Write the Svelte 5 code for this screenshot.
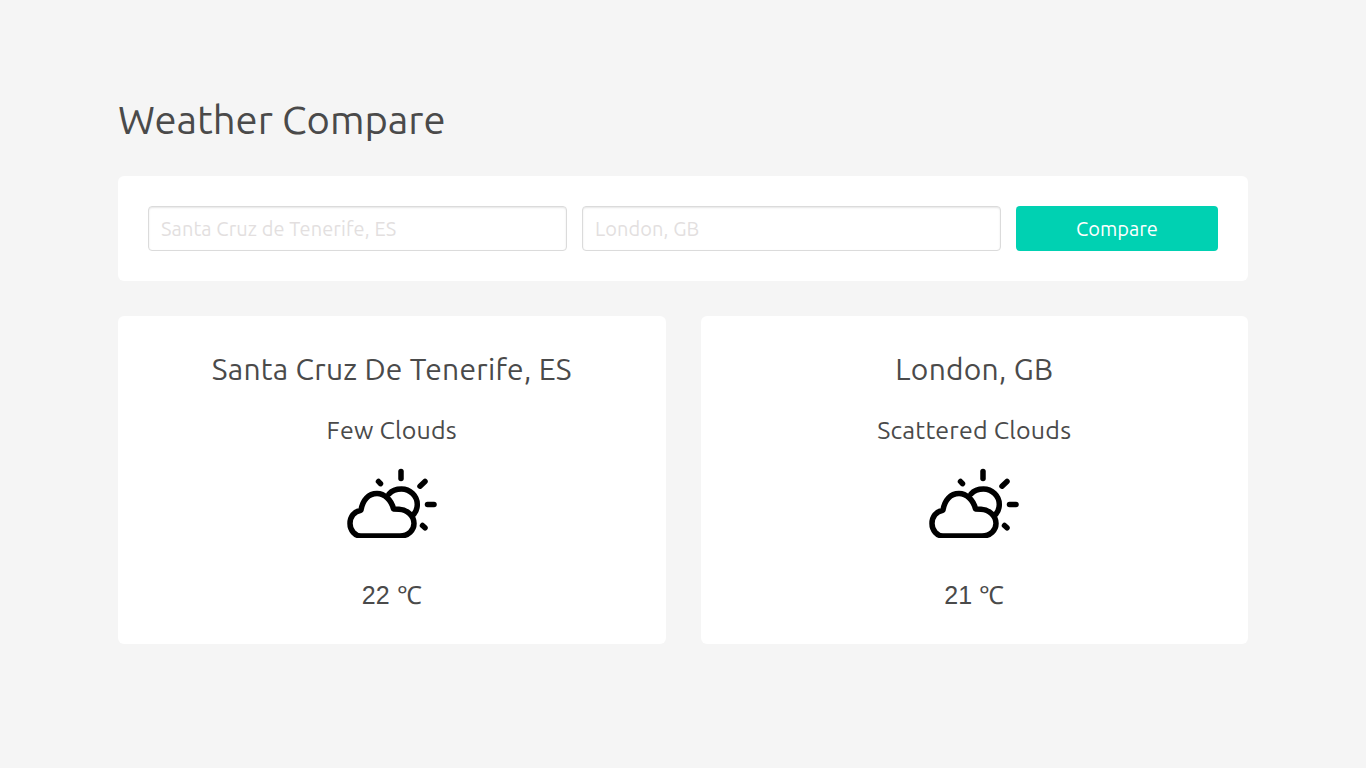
<script>
  const cities = [
    { name: 'Santa Cruz De Tenerife, ES', sky: 'Few Clouds', temp: '22 ℃' },
    { name: 'London, GB', sky: 'Scattered Clouds', temp: '21 ℃' },
  ];
</script>

<main class="page">
  <h1>Weather Compare</h1>

  <form class="search" onsubmit={(e) => e.preventDefault()}>
    <input type="text" placeholder="Santa Cruz de Tenerife, ES" />
    <input type="text" placeholder="London, GB" />
    <button type="submit">Compare</button>
  </form>

  <section class="results">
    {#each cities as city}
      <article class="card">
        <h2>{city.name}</h2>
        <h3>{city.sky}</h3>
        <svg class="icon" viewBox="0 0 90 70" width="90" height="70" aria-hidden="true">
          <g fill="none" stroke="#000" stroke-width="5.500" stroke-linecap="round" stroke-linejoin="round">
            <path d="M14 68H53C61.500 68 67 62 67 55.500C67 48 60.500 41.800 52 41.300L46.500 41C44.500 32 37.500 25.500 30 25.500C21.500 25.500 15.500 32 14 42.200C7 43.200 3 49 3 55.500C3 62.500 8 68 14 68Z" />
            <path d="M42 26C45 22.500 50 21 54.500 21C63 21 70.300 28 70.300 36.500C70.300 40 69 43.500 67 46" />
            <path d="M54 3.500v7" />
            <path d="M31.500 13.500l2 2.200" />
            <path d="M78 13.500l-5 4.700" />
            <path d="M80.500 36.500H87" />
            <path d="M75.500 57.500l2.500 2.300" />
          </g>
        </svg>
        <p>{city.temp}</p>
      </article>
    {/each}
  </section>
</main>

<style>
  :global(body) {
    background: #f5f5f5;
    color: #4a4a4a;
    font-family: Ubuntu, "Open Sans", "Noto Sans", sans-serif;
  }

  .page {
    width: 1130px;
    margin: 0 auto;
    padding-top: 96px;
  }

  h1 {
    margin: 0 0 32px;
    font-size: 40px;
    font-weight: 400;
    line-height: 48px;
    color: #4a4a4a;
  }

  .search {
    display: flex;
    gap: 15px;
    padding: 30px;
    background: #fff;
    border-radius: 6px;
  }

  input {
    flex: 1;
    min-width: 0;
    height: 45px;
    box-sizing: border-box;
    padding: 0 12px;
    border: 1px solid #dbdbdb;
    border-radius: 4px;
    box-shadow: inset 0 1px 2px rgba(10, 10, 10, 0.1);
    background: #fff;
    font: inherit;
    font-size: 20px;
    letter-spacing: 0.08px;
    color: #363636;
    outline: none;
  }

  input::placeholder {
    color: #e3dfdf;
    opacity: 1;
  }

  button {
    width: 202px;
    height: 45px;
    border: none;
    border-radius: 4px;
    background: #00d1b2;
    color: #fff;
    font: inherit;
    font-size: 20px;
  }

  .results {
    display: grid;
    grid-template-columns: repeat(2, 1fr);
    gap: 35px;
    margin-top: 35px;
  }

  .card {
    height: 328px;
    box-sizing: border-box;
    padding-top: 33px;
    background: #fff;
    border-radius: 6px;
    text-align: center;
  }

  h2 {
    margin: 0;
    font-size: 30px;
    font-weight: 400;
    line-height: 40px;
    letter-spacing: 0.25px;
  }

  h3 {
    margin: 24px 0 0;
    font-size: 25px;
    font-weight: 400;
    line-height: 34px;
    letter-spacing: 0.2px;
  }

  .icon {
    display: block;
    margin: 21px auto 0;
  }

  p {
    margin: 41px 0 0;
    font-family: "Liberation Sans", sans-serif;
    font-size: 25px;
    line-height: 32px;
  }
</style>
